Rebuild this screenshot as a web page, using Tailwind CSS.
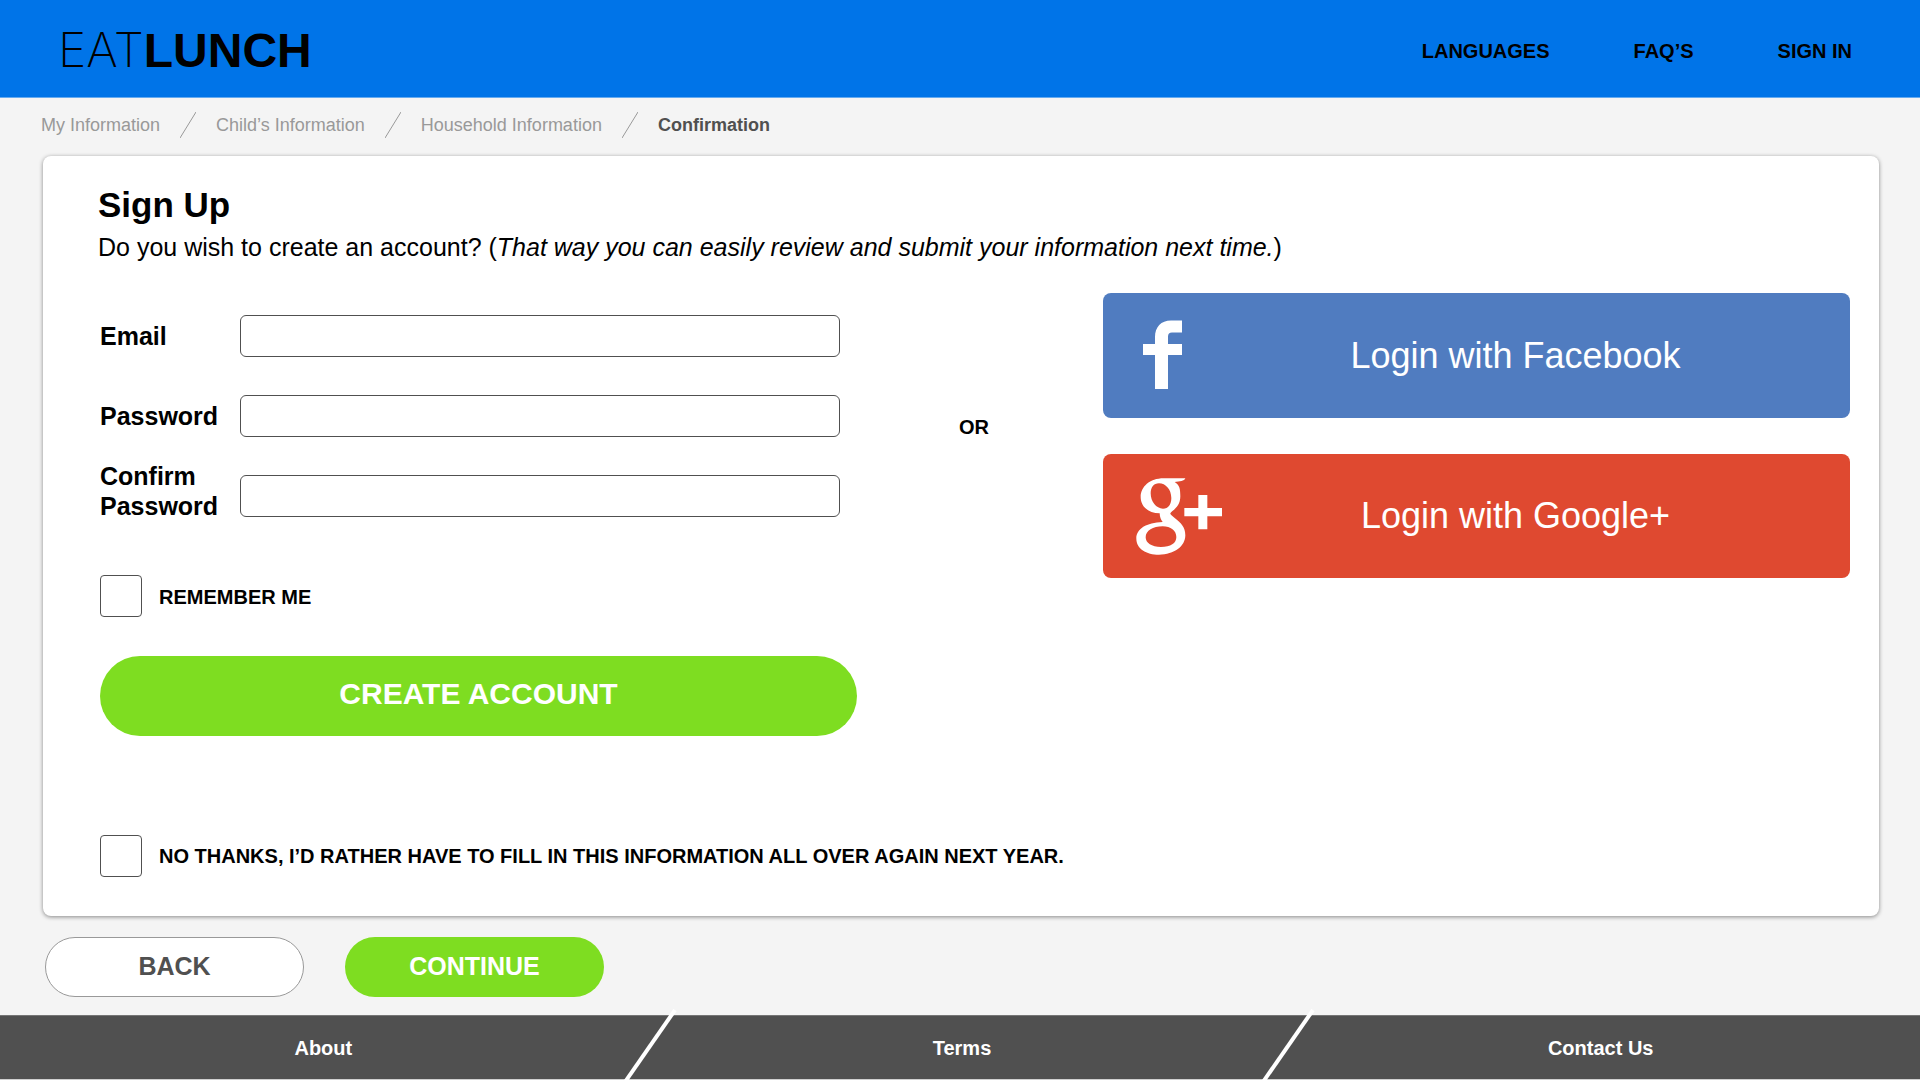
<!DOCTYPE html>
<html lang="en">
<head>
  <meta charset="UTF-8" />
  <meta name="viewport" content="width=device-width, initial-scale=1" />
  <title>EatLunch - Sign Up</title>
  <script src="https://cdn.jsdelivr.net/npm/@tailwindcss/browser@4"></script>
</head>
<body class="bg-[#f4f4f4] min-h-screen flex flex-col overflow-x-hidden font-['Liberation_Sans',Arial,sans-serif] text-black">

  <!-- Header -->
  <header class="h-[98px] bg-[#0074e8] border-b border-[#66abf0] flex items-center justify-between pt-1 pl-[58px] pr-[68px]">
    <a href="#" class="text-[48px] leading-none font-bold flex items-baseline"><span class="font-extralight font-['Inter',sans-serif]">EAT</span>LUNCH</a>
    <nav class="flex gap-21 text-[20px] font-bold">
      <a href="#">LANGUAGES</a>
      <a href="#">FAQ’S</a>
      <a href="#">SIGN IN</a>
    </nav>
  </header>

  <!-- Breadcrumb -->
  <nav aria-label="Progress" class="h-[58px] pb-1 pl-[41px] flex items-center gap-5 text-lg text-[#999999]">
    <a href="#">My Information</a>
    <svg class="w-4 h-[26px]" viewBox="0 0 16 26" fill="none" stroke="#999999" aria-hidden="true"><path d="M0 26L16 0" /></svg>
    <a href="#">Child’s Information</a>
    <svg class="w-4 h-[26px]" viewBox="0 0 16 26" fill="none" stroke="#999999" aria-hidden="true"><path d="M0 26L16 0" /></svg>
    <a href="#">Household Information</a>
    <svg class="w-4 h-[26px]" viewBox="0 0 16 26" fill="none" stroke="#999999" aria-hidden="true"><path d="M0 26L16 0" /></svg>
    <a href="#" aria-current="page" class="font-bold text-[#505050]">Confirmation</a>
  </nav>

  <!-- Sign up card -->
  <main class="ml-[43px] mr-[41px] bg-white rounded-lg shadow-[0_1px_4px_rgba(0,0,0,0.45)] pt-7 pb-[39px] pl-[55px] pr-[29px]">
    <h1 class="text-[35px] leading-[42px] font-bold">Sign Up</h1>
    <p class="text-[25px] leading-[42px]">Do you wish to create an account? (<em>That way you can easily review and submit your information next time.</em>)</p>

    <div class="ml-0.5 grid grid-cols-[757fr_246fr_747fr] items-start">
      <!-- Account form -->
      <form class="pt-7">
        <div class="pr-[17px] text-[25px] leading-[30px] font-bold">
          <div class="h-20 flex items-center">
            <label for="email" class="w-[140px]">Email</label>
            <input type="email" id="email" name="email" class="flex-1 h-[42px] border border-[#505050] rounded-md px-3 font-normal" />
          </div>
          <div class="h-20 flex items-center">
            <label for="password" class="w-[140px]">Password</label>
            <input type="password" id="password" name="password" class="flex-1 h-[42px] border border-[#505050] rounded-md px-3 font-normal" />
          </div>
          <div class="h-20 flex items-center">
            <label for="confirmPassword" class="w-[140px] pb-2.5">Confirm Password</label>
            <input type="password" id="confirmPassword" name="confirmPassword" class="flex-1 h-[42px] border border-[#505050] rounded-md px-3 font-normal" />
          </div>
        </div>
        <div class="mt-[39px] flex items-center gap-[17px]">
          <input type="checkbox" id="remember" name="remember" class="appearance-none size-[42px] border border-[#505050] rounded-sm checked:bg-[#7edd21]" />
          <label for="remember" class="pt-0.5 text-[20px] font-bold">REMEMBER ME</label>
        </div>
        <button type="submit" class="mt-[39px] w-full h-20 pb-1.5 rounded-full bg-[#7edd21] text-white text-[30px] font-bold">CREATE ACCOUNT</button>
      </form>

      <p class="mt-36 pr-3 text-center text-[20px] leading-[30px] font-bold">OR</p>

      <!-- Social logins -->
      <div class="mt-[25px] flex flex-col gap-9 text-[36px] text-white">
        <button type="button" class="h-[125px] rounded-lg bg-[#507cc0] pl-[30px] pr-[42px] flex items-center">
          <svg class="w-[90px] h-[78px]" viewBox="0 0 90 78" fill="currentColor" aria-hidden="true">
            <path d="M49 3.500V15.500H39Q35 15.500 35 19.500V27H49V38H35V72H22V38H10V27H22V20C22 10 28 3.500 38 3.500Z" />
          </svg>
          <span class="flex-1 text-center">Login with Facebook</span>
        </button>
        <button type="button" class="h-[124px] rounded-lg bg-[#df4930] pl-[30px] pr-[42px] flex items-center">
          <svg class="w-[90px] h-[78px]" viewBox="0 0 270 234" fill="currentColor" aria-hidden="true">
            <path fill-rule="evenodd" d="M157 4H92C50 4 23 30 23 60C23 90 48 109 80 109C80 120 84 129 89 135C40 137 10 155 10 185C10 215 40 233 78 233C124 233 157 208 157 175C157 150 144 138 126 124C116 116 111 112 112 109C116 100 142 92 142 58C142 36 140 24 125 15C140 14 154 12 157 4ZM78 19C98 19 115 38 115 63C115 82 106 95 90 95C70 95 53 74 53 49C53 31 62 19 78 19ZM89 148C113 148 130 161 130 180C130 199 113 210 84 210C56 210 38 198 38 181C38 161 60 148 89 148Z" />
            <path d="M196 54H223V93H267V118H223V157H196V118H154V93H196Z" />
          </svg>
          <span class="flex-1 text-center">Login with Google+</span>
        </button>
      </div>
    </div>

    <div class="ml-0.5 mt-[99px] flex items-center gap-[17px]">
      <input type="checkbox" id="noThanks" name="noThanks" class="appearance-none size-[42px] border border-[#505050] rounded-sm checked:bg-[#7edd21]" />
      <label for="noThanks" class="text-[20px] font-bold">NO THANKS, I’D RATHER HAVE TO FILL IN THIS INFORMATION ALL OVER AGAIN NEXT YEAR.</label>
    </div>
  </main>

  <!-- Step buttons -->
  <div class="mt-[21px] mb-[18px] ml-[45px] flex gap-[41px] text-[25px] font-bold">
    <button type="button" class="w-[259px] h-[60px] rounded-full border border-[#999999] bg-white text-[#505050]">BACK</button>
    <button type="button" class="w-[259px] h-[60px] rounded-full bg-[#7edd21] text-white">CONTINUE</button>
  </div>

  <!-- Footer -->
  <footer class="mt-auto h-[65px] pl-1 bg-[#505050] border-t border-t-[#757575] border-b border-b-[#d0d0d0] grid grid-cols-3 text-[20px] font-bold text-white">
    <div class="relative flex items-center justify-center">
      <a href="#">About</a>
      <svg class="absolute bottom-[-1px] right-[-35px] w-[54px] h-[71px]" viewBox="0 0 54 71" fill="none" stroke="#ffffff" stroke-width="4" aria-hidden="true"><path d="M1 73L51 1" /></svg>
    </div>
    <div class="relative flex items-center justify-center">
      <a href="#">Terms</a>
      <svg class="absolute bottom-[-1px] right-[-35px] w-[54px] h-[71px]" viewBox="0 0 54 71" fill="none" stroke="#ffffff" stroke-width="4" aria-hidden="true"><path d="M1 73L51 1" /></svg>
    </div>
    <div class="flex items-center justify-center">
      <a href="#">Contact Us</a>
    </div>
  </footer>

</body>
</html>
